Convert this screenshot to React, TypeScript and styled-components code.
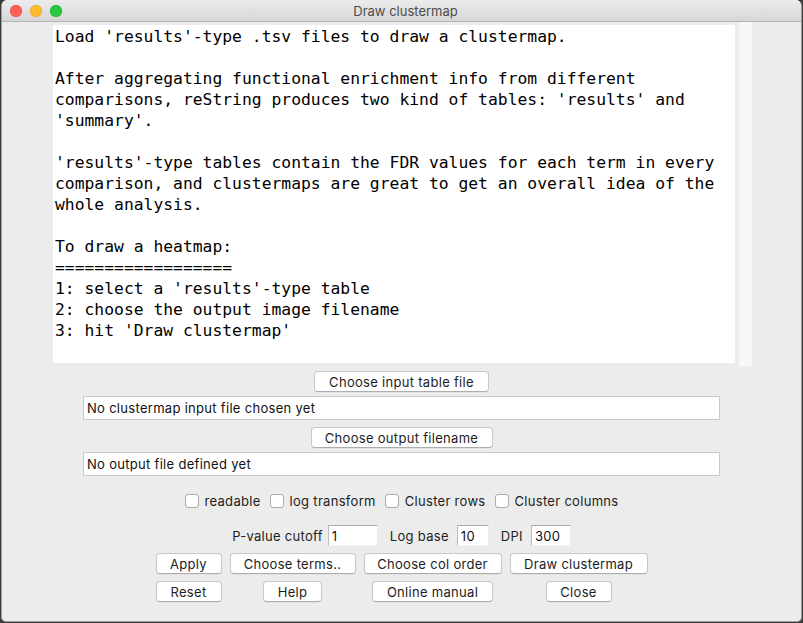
import React from 'react';
import styled, { createGlobalStyle } from 'styled-components';

const Global = createGlobalStyle`
  html, body { margin: 0; padding: 0; background: #3a3a3a; width: 803px; height: 623px; overflow: hidden; }
  #root { width: 803px; height: 623px; }
`;

const Desktop = styled.div`
  width: 803px;
  height: 623px;
  padding-left: 1px;
  box-sizing: border-box;
`;

const Window = styled.div`
  width: 801px;
  height: 622px;
  box-sizing: border-box;
  background: #ececec;
  border: 1px solid #9d9d9d;
  border-top: none;
  border-radius: 6px 6px 5px 5px;
  overflow: hidden;
  display: flex;
  flex-direction: column;
  font-family: Inter, "Liberation Sans", sans-serif;
`;

const TitleBar = styled.div`
  height: 22px;
  box-sizing: border-box;
  background: linear-gradient(#ececec, #d6d6d6);
  border-bottom: 1px solid #b3b3b3;
  display: grid;
  grid-template-columns: 1fr auto 1fr;
  align-items: center;
  padding-left: 8px;
  font-size: 13px;
  color: #4d4d4d;
`;

const Lights = styled.div`
  display: flex;
  gap: 8px;
`;

const Light = styled.span<{ $c: string; $b: string }>`
  width: 12px;
  height: 12px;
  border-radius: 50%;
  background: ${p => p.$c};
  box-shadow: inset 0 0 0 0.5px ${p => p.$b};
`;

const Title = styled.div`
  margin-top: 1px;
`;

const TextRow = styled.div`
  display: flex;
  justify-content: center;
  gap: 4px;
  height: 344px;
  padding-left: 2px;
`;

const TextArea = styled.div`
  width: 682px;
  margin: 3px 0;
  box-sizing: border-box;
  background: #fff;
  padding: 1px 0 0 2px;
  font-family: "DejaVu Sans Mono", monospace;
  font-size: 16.35px;
  line-height: 21px;
  white-space: pre;
  color: #000;
  overflow: hidden;
`;

const ScrollTrack = styled.div`
  width: 13px;
  background: #f8f8f8;
`;

const Controls = styled.div`
  display: flex;
  flex-direction: column;
  align-items: center;
  font-size: 13px;
  letter-spacing: 0.3px;
  color: #1d1d1d;
`;

const Button = styled.button<{ $w: number; $mt?: number }>`
  width: ${p => p.$w}px;
  height: 21px;
  margin-top: ${p => p.$mt ?? 0}px;
  padding: 0;
  box-sizing: border-box;
  background: #fff;
  border: 1px solid #c8c8c8;
  border-bottom-color: #adadad;
  border-radius: 4px;
  font-family: Inter, "Liberation Sans", sans-serif;
  font-size: 13px;
  letter-spacing: 0.3px;
  color: #1d1d1d;
  box-shadow: 0 0.5px 0.5px rgba(0, 0, 0, 0.08);
`;

const PathField = styled.div<{ $mt: number }>`
  width: 637px;
  height: 24px;
  margin-top: ${p => p.$mt}px;
  box-sizing: border-box;
  background: #fff;
  border: 1px solid #c9c9c9;
  padding-left: 3px;
  display: flex;
  align-items: center;
  font-size: 13px;
  color: #111;
`;

const CheckRow = styled.div`
  display: flex;
  align-items: center;
  gap: 9px;
  height: 18px;
  margin-top: 16px;
`;

const CheckItem = styled.label`
  display: flex;
  align-items: center;
  gap: 6px;
`;

const Box = styled.span`
  width: 14px;
  height: 14px;
  box-sizing: border-box;
  background: #fff;
  border: 1px solid #ababab;
  border-radius: 3px;
`;

const ParamRow = styled.div`
  display: flex;
  align-items: center;
  height: 21px;
  margin-top: 15px;
`;

const ParamLabel = styled.span<{ $ml: number; $mr: number }>`
  margin-left: ${p => p.$ml}px;
  margin-right: ${p => p.$mr}px;
`;

const Entry = styled.div<{ $w: number }>`
  width: ${p => p.$w}px;
  height: 21px;
  box-sizing: border-box;
  background: #fff;
  border-top: 1px solid #a9a9a9;
  border-left: 1px solid #bcbcbc;
  border-right: 1px solid #ececec;
  border-bottom: 1px solid #f2f2f2;
  padding-left: 3px;
  display: flex;
  align-items: center;
  font-size: 13px;
  color: #111;
`;

const ButtonGrid = styled.div`
  display: grid;
  grid-template-columns: repeat(4, auto);
  column-gap: 8px;
  row-gap: 7px;
  justify-items: center;
  margin-top: 7px;
`;

const helpText = `Load 'results'-type .tsv files to draw a clustermap.

After aggregating functional enrichment info from different
comparisons, reString produces two kind of tables: 'results' and
'summary'.

'results'-type tables contain the FDR values for each term in every
comparison, and clustermaps are great to get an overall idea of the
whole analysis.

To draw a heatmap:
==================
1: select a 'results'-type table
2: choose the output image filename
3: hit 'Draw clustermap'`;

const checks = ['readable', 'log transform', 'Cluster rows', 'Cluster columns'];

const buttons: { label: string; w: number }[] = [
  { label: 'Apply', w: 66 },
  { label: 'Choose terms..', w: 126 },
  { label: 'Choose col order', w: 138 },
  { label: 'Draw clustermap', w: 138 },
  { label: 'Reset', w: 66 },
  { label: 'Help', w: 59 },
  { label: 'Online manual', w: 121 },
  { label: 'Close', w: 66 },
];

export default function App() {
  return (
    <Desktop>
      <Global />
      <Window>
        <TitleBar>
          <Lights>
            <Light $c="#fe5f57" $b="#e0443e" />
            <Light $c="#febc2e" $b="#dea123" />
            <Light $c="#28c840" $b="#1aab29" />
          </Lights>
          <Title>Draw clustermap</Title>
          <span />
        </TitleBar>
        <TextRow>
          <TextArea>{helpText}</TextArea>
          <ScrollTrack />
        </TextRow>
        <Controls>
          <Button $w={175} $mt={5}>Choose input table file</Button>
          <PathField $mt={4}>No clustermap input file chosen yet</PathField>
          <Button $w={182} $mt={7}>Choose output filename</Button>
          <PathField $mt={4}>No output file defined yet</PathField>
          <CheckRow>
            {checks.map(c => (
              <CheckItem key={c}>
                <Box />
                {c}
              </CheckItem>
            ))}
          </CheckRow>
          <ParamRow>
            <ParamLabel $ml={0} $mr={5}>P-value cutoff</ParamLabel>
            <Entry $w={50}>1</Entry>
            <ParamLabel $ml={12} $mr={8}>Log base</ParamLabel>
            <Entry $w={32}>10</Entry>
            <ParamLabel $ml={12} $mr={8}>DPI</ParamLabel>
            <Entry $w={40}>300</Entry>
          </ParamRow>
          <ButtonGrid>
            {buttons.map(b => (
              <Button key={b.label} $w={b.w}>{b.label}</Button>
            ))}
          </ButtonGrid>
        </Controls>
      </Window>
    </Desktop>
  );
}
